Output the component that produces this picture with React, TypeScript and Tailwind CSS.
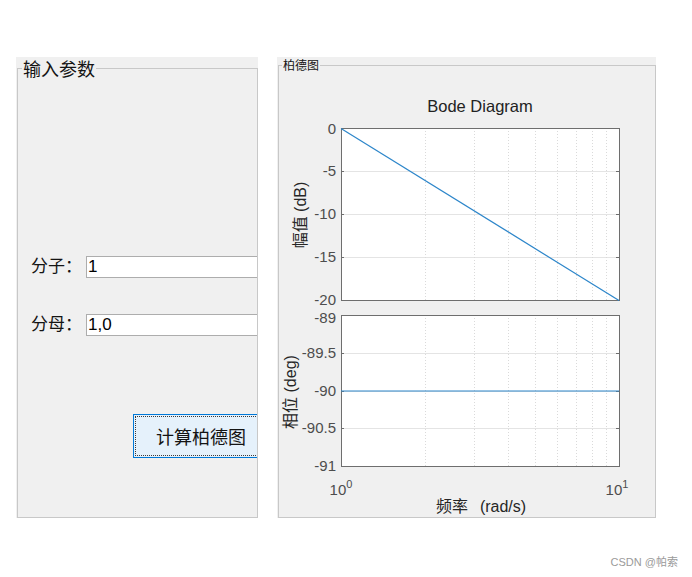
import React from "react";

const X0 = 341;
const X1 = 619;
const logX = (k: number) => X0 + (X1 - X0) * Math.log10(k);

const minor = [2, 3, 4, 5, 6, 7, 8, 9];

const magTicks = [
  { y: 128, ly: 129, label: "0" },
  { y: 171, ly: 171, label: "-5" },
  { y: 214, ly: 214, label: "-10" },
  { y: 257, ly: 257, label: "-15" },
  { y: 300, ly: 300, label: "-20" },
];

const phaseTicks = [
  { y: 315, ly: 318, label: "-89" },
  { y: 353, ly: 353, label: "-89.5" },
  { y: 391, ly: 391, label: "-90" },
  { y: 428, ly: 428, label: "-90.5" },
  { y: 466, ly: 466, label: "-91" },
];

const fontStack = "Liberation Sans, Noto Sans CJK SC, sans-serif";

type Tick = { y: number; ly: number; label: string };

function Axes({ top, bottom, ticks }: { top: number; bottom: number; ticks: Tick[] }) {
  return (
    <g>
      <rect x={X0 + 0.5} y={top + 0.5} width={X1 - X0} height={bottom - top} fill="#ffffff" />
      {ticks.slice(1, -1).map((t) => (
        <line key={t.label} x1={X0} x2={X1} y1={t.y + 0.5} y2={t.y + 0.5} stroke="#e4e4e4" strokeWidth={1} />
      ))}
      {minor.map((k) => (
        <line
          key={k}
          x1={Math.round(logX(k)) + 0.5}
          x2={Math.round(logX(k)) + 0.5}
          y1={top}
          y2={bottom}
          stroke="#dadada"
          strokeWidth={1}
          strokeDasharray="1 2"
        />
      ))}
      {ticks.map((t) => (
        <g key={"t" + t.label}>
          <line x1={X0} x2={X0 + 3} y1={t.y + 0.5} y2={t.y + 0.5} stroke="#6e6e6e" />
          <line x1={X1 - 3} x2={X1} y1={t.y + 0.5} y2={t.y + 0.5} stroke="#6e6e6e" />
          <text x={336} y={t.ly + 5} textAnchor="end" fontSize={15} fill="#4d4d4d" fontFamily={fontStack}>
            {t.label}
          </text>
        </g>
      ))}
      <rect
        x={X0 + 0.5}
        y={top + 0.5}
        width={X1 - X0}
        height={bottom - top}
        fill="none"
        stroke="#6e6e6e"
        strokeWidth={1}
      />
    </g>
  );
}

function BodePlot() {
  return (
    <svg width={376} height={444} viewBox="279 73 376 444" className="block">
      <text x={480} y={112} textAnchor="middle" fontSize={16.5} fill="#222222" fontFamily={fontStack}>
        Bode Diagram
      </text>

      <Axes top={128} bottom={300} ticks={magTicks} />
      <Axes top={315} bottom={466} ticks={phaseTicks} />

      <line x1={X0} y1={128.5} x2={X1} y2={300.5} stroke="#2d86ca" strokeWidth={1.2} />
      <line x1={X0} y1={391} x2={X1} y2={391} stroke="#2d86ca" strokeWidth={1.2} />

      <text transform="translate(306,215) rotate(-90)" textAnchor="middle" fontSize={16} fill="#262626" fontFamily={fontStack}>
        幅值 (dB)
      </text>
      <text transform="translate(296,392) rotate(-90)" textAnchor="middle" fontSize={16} fill="#262626" fontFamily={fontStack}>
        相位 (deg)
      </text>

      <text x={341} y={495} textAnchor="middle" fontSize={15} fill="#4d4d4d" fontFamily={fontStack}>
        10
        <tspan dy={-7} fontSize={11}>
          0
        </tspan>
      </text>
      <text x={617} y={495} textAnchor="middle" fontSize={15} fill="#4d4d4d" fontFamily={fontStack}>
        10
        <tspan dy={-7} fontSize={11}>
          1
        </tspan>
      </text>

      <text x={481} y={512} textAnchor="middle" fontSize={16} fill="#262626" fontFamily={fontStack}>
        频率
        <tspan dx={12}>(rad/s)</tspan>
      </text>
    </svg>
  );
}

function ParamRow({ label, value, className }: { label: string; value: string; className?: string }) {
  return (
    <div className={"flex h-[22px] items-center pl-[13px] " + (className ?? "")}>
      <div className="w-[55px] -translate-y-[2px] text-[17px] leading-[22px] text-[#141414] font-['Noto_Sans_CJK_SC',sans-serif]">
        {label}
      </div>
      <div className="flex h-[22px] flex-1 items-center border border-r-0 border-[#adadad] bg-white pl-[1px] text-[17px] leading-[20px] text-black font-['Liberation_Sans','Noto_Sans_CJK_SC',sans-serif]">
        {value}
      </div>
    </div>
  );
}

export default function App() {
  return (
    <div className="flex h-[577px] w-[692px] flex-col bg-white">
      <div className="flex gap-[19px] pl-[16px] pt-[57px]">
        {/* 输入参数 */}
        <div className="flex h-[461px] w-[242px] flex-col bg-[#f0f0f0] pl-px">
          <div className="flex h-[22px]">
            <div className="mt-[11px] h-[11px] w-[5px] border-l border-t border-[#c8c8c8]" />
            <div className="px-px text-[18px] leading-[22px] text-[#141414] font-['Noto_Sans_CJK_SC',sans-serif]">
              输入参数
            </div>
            <div className="mt-[11px] h-[11px] flex-1 border-r border-t border-[#c8c8c8]" />
          </div>
          <div className="flex flex-1 flex-col border-b border-l border-r border-[#c8c8c8]">
            <ParamRow label="分子：" value="1" className="mt-[177px]" />
            <ParamRow label="分母：" value="1,0" className="mt-[36px]" />
            <div className="mt-[78px] flex pl-[115px]">
              <div className="h-[44px] flex-1 border border-r-0 border-[#0078d7] bg-[#e5f1fb] p-px">
                <div className="flex h-full items-center border border-r-0 border-dotted border-[#3a3a3a] pl-[20px] text-[18px] leading-[22px] text-[#141414] font-['Noto_Sans_CJK_SC',sans-serif]">
                  计算柏德图
                </div>
              </div>
            </div>
          </div>
        </div>

        {/* 柏德图 */}
        <div className="flex h-[461px] w-[379px] flex-col bg-[#f0f0f0] pl-px">
          <div className="flex h-[16px]">
            <div className="mt-[8px] h-[8px] w-[4px] border-l border-t border-[#c8c8c8]" />
            <div className="px-px text-[12px] leading-[16px] text-[#141414] font-['Noto_Sans_CJK_SC',sans-serif]">
              柏德图
            </div>
            <div className="mt-[8px] h-[8px] flex-1 border-r border-t border-[#c8c8c8]" />
          </div>
          <div className="flex-1 border-b border-l border-r border-[#c8c8c8]">
            <BodePlot />
          </div>
        </div>
      </div>

      <div className="mt-[37px] flex justify-end pr-[14px] text-[11px] leading-[14px] text-[#9a9a9a] font-['Liberation_Sans','Noto_Sans_CJK_SC',sans-serif]">
        CSDN @帕索
      </div>
    </div>
  );
}
